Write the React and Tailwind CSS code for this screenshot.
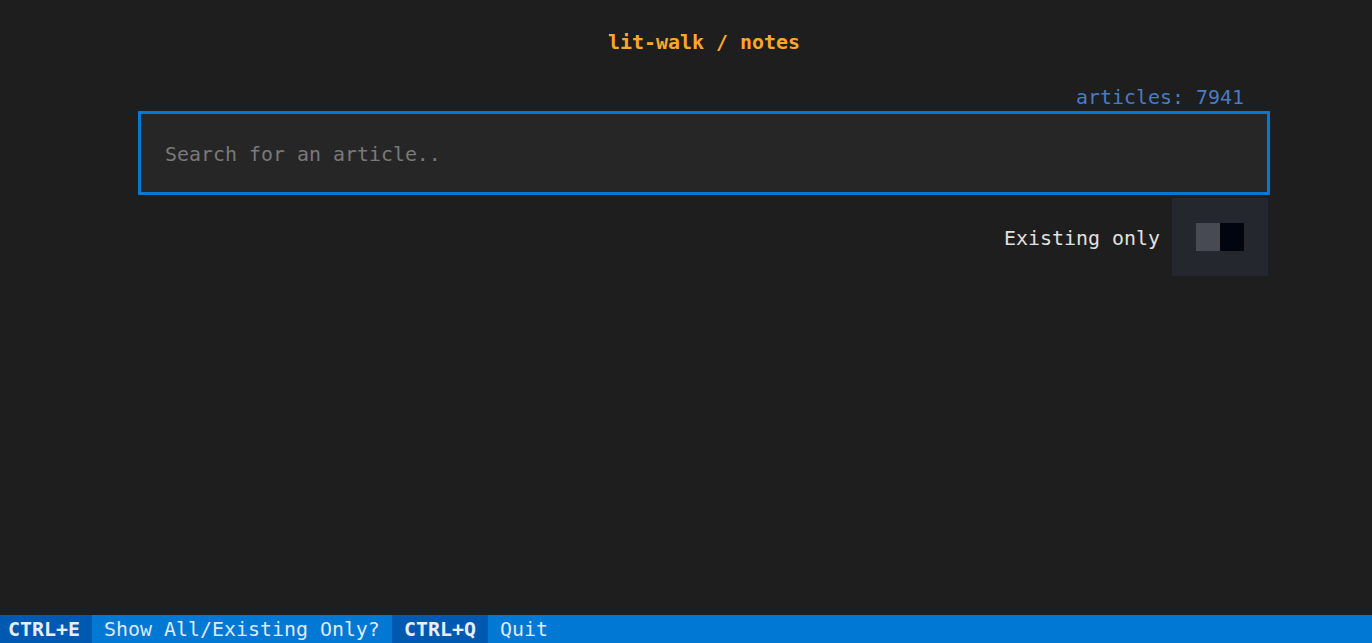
const App = () => {
    return (
        <div className="h-[643px] w-full bg-[#1e1e1e] flex flex-col font-['DejaVu_Sans_Mono',monospace] text-[19.93px] leading-[28px] overflow-hidden">
            <main className="flex-1">
                <div className="ml-[138px] w-[1132px] pt-[28px]">
                    {/* header */}
                    <div className="h-[28px] pt-[1px] text-center font-bold text-[#ffa62b]">lit-walk / notes</div>
                    <div className="mt-[28px] h-[27px] pr-[26px] text-right text-[#4a7cc0]">articles: 7941</div>

                    {/* search box */}
                    <div className="h-[84px] border-[3px] border-[#0178d4] bg-[#262626] flex items-center pl-[24px] pt-[3px]">
                        <span className="text-[#797979]">Search for an article..</span>
                    </div>

                    {/* toggle row */}
                    <div className="mt-[3px] pr-[2px] flex justify-end items-center gap-[12px]">
                        <span className="text-[#e0e0e0] pt-[3px]">Existing only</span>
                        <div className="w-[96px] h-[78px] bg-[#24272e] flex items-center justify-center">
                            <div className="flex h-[28px]">
                                <div className="w-[24px] bg-[#474a52]"></div>
                                <div className="w-[24px] bg-[#00050f]"></div>
                            </div>
                        </div>
                    </div>
                </div>
            </main>

            <footer className="h-[28px] bg-[#0178d4] flex text-[#e6eef8] whitespace-pre pt-[1px]">
                <div className="w-[92px] -mt-[1px] pt-[1px] pl-[8px] bg-[#0059b1] font-bold">CTRL+E</div>
                <div className="w-[300px] pl-[12px] text-[#dfe9f5]">Show All/Existing Only?</div>
                <div className="w-[96px] -mt-[1px] pt-[1px] pl-[12px] bg-[#0059b1] font-bold">CTRL+Q</div>
                <div className="pl-[12px] text-[#dfe9f5]">Quit</div>
            </footer>
        </div>
    );
};

export default App;
